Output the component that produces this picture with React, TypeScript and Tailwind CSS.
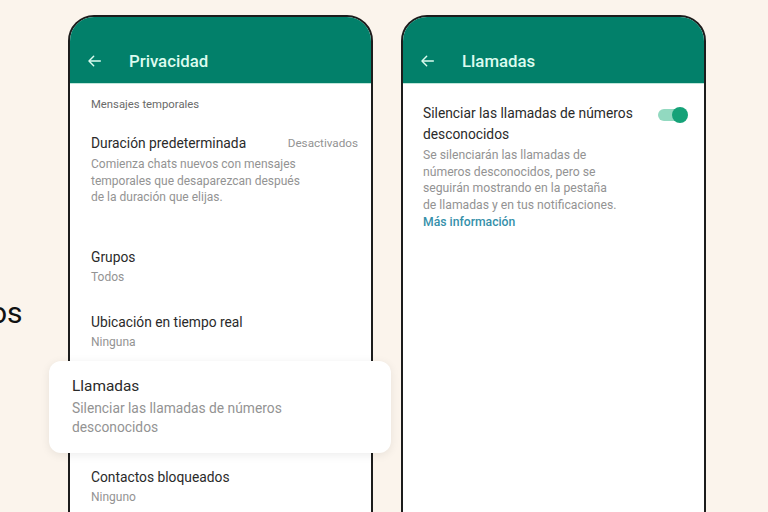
import React from "react";

function BackArrow() {
  return (
    <svg
      viewBox="0 0 24 24"
      className="h-[16px] w-[16px]"
      fill="none"
      stroke="currentColor"
      strokeWidth={2.2}
      strokeLinecap="round"
      strokeLinejoin="round"
    >
      <path d="M20 12H4" />
      <path d="M10 5l-7 7 7 7" />
    </svg>
  );
}

function Header({ title }: { title: string }) {
  return (
    <div className="flex h-[67px] items-end border-b border-[#bfe6da] bg-[#02806a] pb-[12px] text-[#dcfbef]">
      <div className="ml-[17px] flex h-[20px] w-[42px] items-center">
        <BackArrow />
      </div>
      <div className="text-[16.8px] font-medium leading-[20px]">{title}</div>
    </div>
  );
}

function Item({
  title,
  sub,
  className,
}: {
  title: string;
  sub: React.ReactNode;
  className?: string;
}) {
  return (
    <div className={className}>
      <div className="text-[13.8px] leading-[20px] text-[#2a2a2a]">{title}</div>
      <div className="text-[12px] leading-[20px] text-[#939393]">{sub}</div>
    </div>
  );
}

export default function App() {
  return (
    <div className="relative h-[512px] w-[768px] overflow-hidden bg-[#fbf4ec] font-['Roboto',sans-serif]">
      <div className="flex pt-[15px]">
        <div className="w-[68px] shrink-0 pt-[281px]">
          <div className="ml-[-10px] text-[30px] leading-[34px] text-[#111]">os</div>
        </div>

        {/* Privacidad phone */}
        <div className="h-[540px] w-[305px] shrink-0 overflow-hidden rounded-t-[26px] border-2 border-[#1c1c1c] bg-white">
          <Header title="Privacidad" />
          <div className="px-[21px]">
            <div className="pt-[14px] text-[11.3px] leading-[14px] text-[#6a6a6a]">
              Mensajes temporales
            </div>
            <div className="mt-[21px] flex items-center justify-between">
              <div className="text-[13.8px] leading-[20px] text-[#2a2a2a]">
                Duración predeterminada
              </div>
              <div className="mr-[-8px] text-[11.7px] leading-[20px] text-[#939393]">
                Desactivados
              </div>
            </div>
            <div className="mt-[3px] text-[12px] leading-[16.5px] text-[#939393]">
              Comienza chats nuevos con mensajes
              <br />
              temporales que desaparezcan después
              <br />
              de la duración que elijas.
            </div>
            <Item className="mt-[41px]" title="Grupos" sub="Todos" />
            <Item className="mt-[25px]" title="Ubicación en tiempo real" sub="Ninguna" />
            {/* row for Llamadas sits under the floating card */}
            <div className="h-[115px]" />
            <Item title="Contactos bloqueados" sub="Ninguno" />
          </div>
        </div>

        <div className="w-[28px] shrink-0" />

        {/* Llamadas phone */}
        <div className="h-[540px] w-[305px] shrink-0 overflow-hidden rounded-t-[26px] border-2 border-[#1c1c1c] bg-white">
          <Header title="Llamadas" />
          <div className="flex justify-between pl-[20px] pr-[16px] pt-[19px]">
            <div>
              <div className="text-[13.8px] leading-[21px] text-[#2a2a2a]">
                Silenciar las llamadas de números
                <br />
                desconocidos
              </div>
              <div className="mt-[2px] text-[12.2px] leading-[16.7px] text-[#939393]">
                Se silenciarán las llamadas de
                <br />
                números desconocidos, pero se
                <br />
                seguirán mostrando en la pestaña
                <br />
                de llamadas y en tus notificaciones.
              </div>
              <div className="text-[12.2px] font-medium leading-[16.7px] text-[#3590aa]">
                Más información
              </div>
            </div>
            <div className="relative mt-[4px] h-[16px] w-[30px] shrink-0">
              <div className="absolute left-0 top-[2px] h-[12px] w-[26px] rounded-full bg-[#92d9c0]" />
              <div className="absolute right-0 top-0 h-[16px] w-[16px] rounded-full bg-[#15a278]" />
            </div>
          </div>
        </div>
      </div>

      {/* Floating highlight card */}
      <div className="absolute left-[49px] top-[361px] h-[92px] w-[342px] rounded-[12px] bg-white px-[23px] pt-[14px] shadow-[0_2px_10px_rgba(0,0,0,0.08)]">
        <div className="text-[15.4px] leading-[22px] text-[#2a2a2a]">Llamadas</div>
        <div className="mt-[2px] text-[13.8px] leading-[19px] text-[#939393]">
          Silenciar las llamadas de números
          <br />
          desconocidos
        </div>
      </div>
    </div>
  );
}
